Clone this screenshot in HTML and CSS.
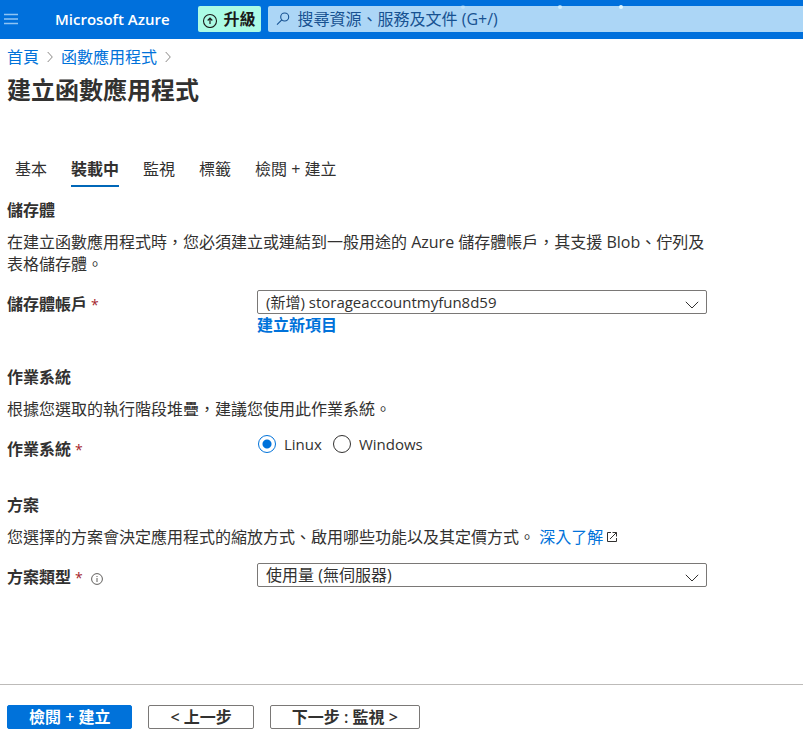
FILE: index.html
```html
<!DOCTYPE html>
<html lang="zh-Hant">
<head>
<meta charset="utf-8">
<meta name="viewport" content="width=device-width, initial-scale=1">
<title>建立函數應用程式 - Microsoft Azure</title>
<link rel="stylesheet" href="styles.css">
</head>
<body>
<header class="topbar">
  <button class="menu-button" type="button" aria-label="選單">
    <svg width="14" height="12" viewBox="0 0 14 12"><path d="M0 1.5h14M0 6h14M0 10.5h14" stroke="currentColor" stroke-width="1.3"/></svg>
  </button>
  <a class="brand" href="#">Microsoft Azure</a>
  <button class="upgrade" type="button">
    <svg width="16" height="18" viewBox="0 0 16 18" fill="none" stroke="currentColor"><circle cx="8" cy="11" r="6.5" stroke-width="1.1"/><path d="M8 14V8.5M5.7 10.5L8 8.2l2.3 2.3" stroke-width="1.2"/></svg>
    升級
  </button>
  <div class="search">
    <svg width="14" height="14" viewBox="0 0 14 14" fill="none" stroke="currentColor" stroke-width="1.1"><circle cx="8.7" cy="5" r="4"/><path d="M5.8 7.9L1 12.7"/></svg>
    <input type="search" aria-label="搜尋" placeholder="搜尋資源、服務及文件 (G+/)">
    <i class="spark spark-faint"></i><i class="spark spark-mid"></i><i class="spark spark-bright"></i>
  </div>
</header>

<nav class="breadcrumb" aria-label="階層連結">
  <a href="#">首頁</a>
  <svg width="6" height="12" viewBox="0 0 6 12"><path d="M.7 1L5.3 6 .7 11"/></svg>
  <a href="#">函數應用程式</a>
  <svg width="6" height="12" viewBox="0 0 6 12"><path d="M.7 1L5.3 6 .7 11"/></svg>
</nav>
<h1>建立函數應用程式</h1>

<nav class="tabs" aria-label="步驟">
  <a href="#">基本</a>
  <a href="#" class="active" aria-current="step">裝載中</a>
  <a href="#">監視</a>
  <a href="#">標籤</a>
  <a href="#">檢閱 + 建立</a>
</nav>

<main>
  <section>
    <h2>儲存體</h2>
    <p>在建立函數應用程式時，您必須建立或連結到一般用途的 Azure 儲存體帳戶，其支援 Blob、佇列及表格儲存體。</p>
    <div class="field">
      <label class="name" for="account">儲存體帳戶<span class="required">*</span></label>
      <div class="control">
        <div class="dropdown">
          <select id="account" class="latin"><option>(新增) storageaccountmyfun8d59</option></select>
          <svg width="14" height="8" viewBox="0 0 14 8"><path d="M.8.8L7 7 13.2.8"/></svg>
        </div>
        <a class="create" href="#">建立新項目</a>
      </div>
    </div>
  </section>

  <section>
    <h2>作業系統</h2>
    <p>根據您選取的執行階段堆疊，建議您使用此作業系統。</p>
    <div class="field" role="radiogroup" aria-labelledby="os-label">
      <span class="name" id="os-label">作業系統<span class="required">*</span></span>
      <div class="control radios">
        <label class="latin"><input type="radio" name="os" checked>Linux</label>
        <label class="latin"><input type="radio" name="os">Windows</label>
      </div>
    </div>
  </section>

  <section>
    <h2>方案</h2>
    <p>您選擇的方案會決定應用程式的縮放方式、啟用哪些功能以及其定價方式。 <a href="#">深入了解<svg class="external" width="12" height="12" viewBox="0 0 12 12"><path d="M5 1.5H1.5v9h9V7M6.5 1.5h4v4M10.5 1.5L4 8"/></svg></a></p>
    <div class="field">
      <label class="name" for="plan">方案類型<span class="required">*</span><svg class="info" width="12" height="12" viewBox="0 0 12 12"><circle cx="6" cy="6" r="5.4"/><path d="M6 5v4M6 3v1"/></svg></label>
      <div class="control">
        <div class="dropdown">
          <select id="plan"><option>使用量 (無伺服器)</option></select>
          <svg width="14" height="8" viewBox="0 0 14 8"><path d="M.8.8L7 7 13.2.8"/></svg>
        </div>
      </div>
    </div>
  </section>
</main>

<footer>
  <button class="primary" type="button">檢閱 + 建立</button>
  <button type="button">&lt; 上一步</button>
  <button type="button">下一步 : 監視 &gt;</button>
</footer>
</body>
</html>
```
FILE: styles.css
```css
* { box-sizing: border-box; }

body {
  margin: 0;
  min-height: 100vh;
  display: flex;
  flex-direction: column;
  background: #fff;
  color: #323130;
  font: 16px/22px "Open Sans", "Noto Sans CJK TC", sans-serif;
}

button, input, select { font: inherit; color: inherit; }
button { cursor: pointer; }
a { color: #0072da; text-decoration: none; }
svg { flex: none; fill: none; stroke: currentColor; }

.topbar {
  display: flex;
  align-items: center;
  height: 39px;
  padding: 0 0 1px 4px;
  background: #0070dc;
  color: #fff;
}
.menu-button {
  display: flex;
  padding: 0;
  border: 0;
  background: none;
  color: #8fc4f3;
}
.brand {
  margin: 0 28px 0 37px;
  color: #fff;
  font-weight: 600;
  font-size: 15px;
  white-space: nowrap;
}
.upgrade {
  display: flex;
  align-items: center;
  gap: 6px;
  height: 26px;
  margin-right: 7px;
  padding: 0 5px 0 4px;
  border: 0;
  border-radius: 2px;
  background: #abfbe5;
  color: #1b1a19;
  font-weight: 600;
  white-space: nowrap;
}
.search {
  position: relative;
  flex: 1;
  display: flex;
  align-items: center;
  gap: 8px;
  min-width: 0;
  height: 26px;
  padding-left: 8px;
  border-radius: 2px 0 0 2px;
  background: #acd6f6;
  color: #175292;
}
.search input {
  flex: 1;
  min-width: 0;
  padding: 0;
  border: 0;
  outline: 0;
  background: none;
}
.search input::placeholder { color: inherit; opacity: 1; }
.spark {
  position: absolute;
  top: -1px;
  width: 4px;
  height: 4px;
  border-radius: 50%;
  background: #e2f8ff;
}
.spark-faint { left: 193px; opacity: .35; }
.spark-mid { left: 290px; opacity: .7; }
.spark-bright { left: 351px; }

.breadcrumb {
  display: flex;
  align-items: center;
  gap: 8px;
  padding: 7px 7px 0;
}
.breadcrumb svg { color: #8a8886; }
h1 {
  margin: 6px 7px 0;
  font-size: 24px;
  line-height: 32px;
  font-weight: 600;
}

.tabs {
  display: flex;
  flex-wrap: wrap;
  gap: 24px;
  margin: 52px 15px 0;
}
.tabs a {
  padding-bottom: 5px;
  border-bottom: 2px solid transparent;
  color: inherit;
}
.tabs .active {
  border-color: #0067b8;
  font-weight: 600;
}

main {
  width: 100%;
  max-width: 714px;
  padding: 0 7px;
}
section { padding-top: 12px; }
section + section { padding-top: 30px; }
h2 {
  margin: 0 0 10px;
  font-size: 16px;
  line-height: 22px;
  font-weight: 600;
}
p { margin: 0 0 15px; }

.field { display: flex; }
.name {
  width: 250px;
  padding-top: 3px;
  font-weight: 600;
}
.required {
  margin-left: 4px;
  color: #a4262c;
  font-size: 14px;
  font-weight: 400;
}
.info {
  margin-left: 8px;
  vertical-align: -2px;
  color: #605e5c;
}
.external {
  margin-left: 3px;
  color: #323130;
}
.control {
  flex: 1;
  min-width: 0;
}
.dropdown {
  position: relative;
  height: 24px;
}
.dropdown select {
  appearance: none;
  display: block;
  width: 100%;
  height: 24px;
  padding: 0 32px 0 8px;
  border: 1px solid #7a7876;
  border-radius: 2px;
  background: #fff;
}
.dropdown svg {
  position: absolute;
  right: 8px;
  top: 11px;
  pointer-events: none;
}
.create {
  display: block;
  font-weight: 600;
}

.radios {
  display: flex;
  align-items: flex-start;
  gap: 10px;
  min-height: 29px;
}
.radios label {
  display: flex;
  align-items: center;
  gap: 8px;
  line-height: 18px;
}
.radios input {
  appearance: none;
  width: 18px;
  height: 18px;
  margin: 0 0 0 1px;
  border: 1px solid #323130;
  border-radius: 50%;
}
.radios input:checked {
  border-color: #0072da;
  background: radial-gradient(circle, #0072da 4px, #fff 5px);
}

.dropdown .latin, .radios .latin { font-size: 15px; }

footer {
  display: flex;
  flex-wrap: wrap;
  gap: 16px;
  margin-top: auto;
  padding: 20px 7px 18px;
  border-top: 1px solid #bdbbb9;
}
footer button {
  height: 24px;
  padding: 0 21px 1px;
  border: 1px solid #7a7876;
  border-radius: 2px;
  background: #fff;
  font-weight: 600;
  line-height: 20px;
}
footer .primary {
  border-color: #0072da;
  background: #0072da;
  color: #fff;
}
```
